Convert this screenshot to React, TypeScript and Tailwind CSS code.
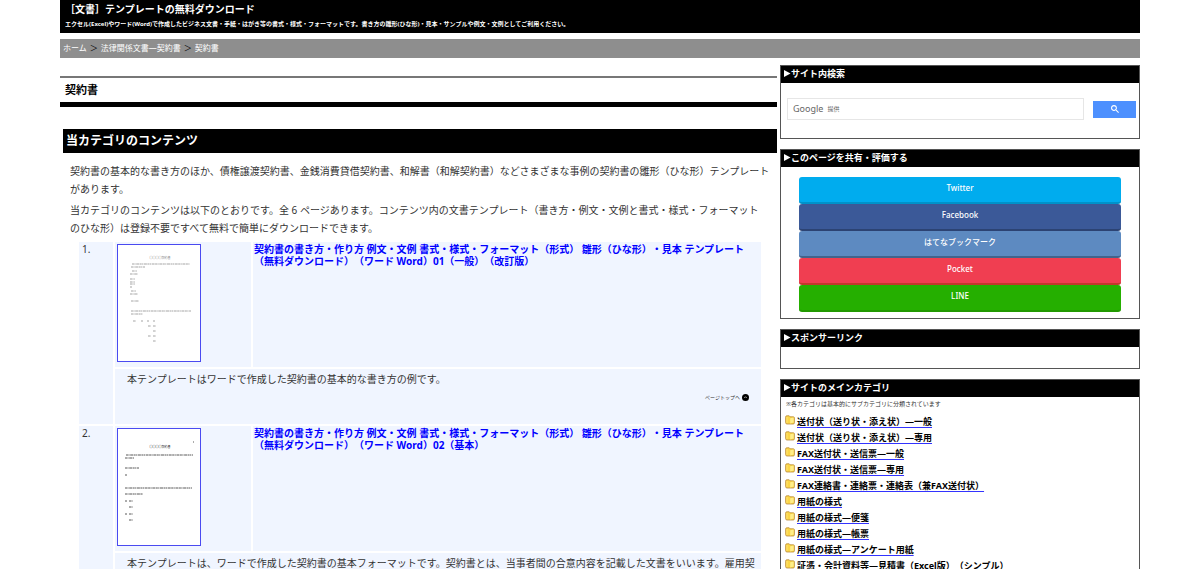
import React from 'react';

type Line = [number, number, number];

interface Template {
  title: string;
  description: string;
  docTitle: string;
  titleY: number;
  ink: string;
  lines: Line[];
}

const templates: Template[] = [
  {
    title:
      '契約書の書き方・作り方 例文・文例 書式・様式・フォーマット（形式） 雛形（ひな形）・見本 テンプレート（無料ダウンロード）（ワード Word）01（一般）（改訂版）',
    description: '本テンプレートはワードで作成した契約書の基本的な書き方の例です。',
    docTitle: '〇〇〇〇契約書',
    titleY: 14,
    ink: '#888',
    lines: [
      [14, 72, 19], [13, 27, 22], [14, 19, 26], [12, 20, 29],
      [12, 17, 34], [12, 17, 37], [12, 17, 39], [12, 14, 42],
      [13, 18, 46], [12, 20, 49], [13, 21, 56],
      [13, 73, 66], [13, 25, 69],
      [15, 18, 76], [23, 25, 76], [29, 31, 76], [35, 37, 76],
      [30, 33, 81], [35, 38, 81], [35, 38, 86], [30, 33, 91], [35, 38, 91], [35, 38, 96],
    ],
  },
  {
    title:
      '契約書の書き方・作り方 例文・文例 書式・様式・フォーマット（形式） 雛形（ひな形）・見本 テンプレート（無料ダウンロード）（ワード Word）02（基本）',
    description:
      '本テンプレートは、ワードで作成した契約書の基本フォーマットです。契約書とは、当事者間の合意内容を記載した文書をいいます。雇用契約書や売買契約書などがあります。',
    docTitle: '〇〇〇〇契約書',
    titleY: 19,
    ink: '#222',
    lines: [
      [75, 76, 13], [8, 75, 26], [7, 16, 29], [7, 21, 39], [7, 9, 46],
      [7, 74, 59], [7, 25, 65],
      [7, 9, 72], [11, 15, 72], [11, 15, 78], [7, 9, 85], [11, 15, 85], [11, 15, 91],
    ],
  },
];

const shares = [
  { name: 'Twitter', color: 'bg-[#00acee] border-[#0092ca]' },
  { name: 'Facebook', color: 'bg-[#3b5998] border-[#2c4373]' },
  { name: 'はてなブックマーク', color: 'bg-[#5d8ac1] border-[#43638b]' },
  { name: 'Pocket', color: 'bg-[#f03e51] border-[#c0392b]' },
  { name: 'LINE', color: 'bg-[#25af00] border-[#219900]' },
];

const categories = [
  '送付状（送り状・添え状）―一般',
  '送付状（送り状・添え状）―専用',
  'FAX送付状・送信票―一般',
  'FAX送付状・送信票―専用',
  'FAX連絡書・連絡票・連絡表（兼FAX送付状）',
  '用紙の様式',
  '用紙の様式―便箋',
  '用紙の様式―帳票',
  '用紙の様式―アンケート用紙',
  '証憑・会計資料等―見積書（Excel版）（シンプル）',
];

function Thumbnail({ item }: { item: Template }) {
  return (
    <svg viewBox="0 0 82 116" className="block h-[118px] w-[84px] border border-[#4a4af0] bg-white">
      <text x="42" y={item.titleY} fontSize="3" textAnchor="middle" fill={item.ink}>
        {item.docTitle}
      </text>
      {item.lines.map(([from, to, y], i) => (
        <path
          key={i}
          d={`M${from} ${y}H${to}`}
          stroke={item.ink}
          strokeWidth="1"
          strokeDasharray="2 0.4 1.2 0.6 3 0.5"
          opacity="0.75"
        />
      ))}
    </svg>
  );
}

function FolderIcon() {
  return (
    <svg viewBox="0 0 10 10" className="mt-px h-[10px] w-[10px] shrink-0">
      <path
        d="M.6 2.2Q.6.8 1.8.8h2.4l.9 1h3.2Q9.4 1.8 9.4 3v4.8Q9.4 9 8.2 9H2Q.6 9 .6 7.6z"
        fill="#fbd545"
        stroke="#b98a3c"
        strokeWidth=".8"
      />
      <path d="M5.2 3.2 8.6 2.4v5.2L5.2 8.4z" fill="#ffee8a" />
      <path d="M2 2v5.8" stroke="#ffe680" strokeWidth=".8" />
    </svg>
  );
}

function Panel({ title, children }: { title: string; children?: React.ReactNode }) {
  return (
    <section className="border border-[#555]">
      <h2 className="flex items-center bg-black pb-[2px] pl-[3px] text-[9px] leading-[15px] font-bold text-white">
        <svg viewBox="0 0 8 8" className="h-[7px] w-[7px] fill-white">
          <path d="M0 0 7.5 4 0 8z" />
        </svg>
        {title}
      </h2>
      {children}
    </section>
  );
}

export default function App() {
  return (
    <div
      lang="ja"
      className="h-screen overflow-hidden bg-white font-['Noto_Sans','Noto_Sans_CJK_JP',sans-serif] text-[10px] text-[#333] [text-spacing-trim:space-all]"
    >
      <div className="mx-auto w-[90%]">
        <header className="h-[33px] bg-black px-[5px] font-bold text-white">
          <h1 className="pt-[1px] text-[10px] leading-[16px]">［文書］テンプレートの無料ダウンロード</h1>
          <p className="text-[6px] leading-[14px]">
            エクセル(Excel)やワード(Word)で作成したビジネス文書・手紙・はがき等の書式・様式・フォーマットです。書き方の雛形(ひな形)・見本・サンプルや例文・文例としてご利用ください。
          </p>
        </header>

        <nav className="mt-[6px] flex gap-[3px] bg-[#8e8e8e] px-[3px] pb-[2px] text-[8px] leading-[17px] text-black">
          <a href="#" className="text-white">ホーム</a>
          <span>＞</span>
          <a href="#" className="text-white">法律関係文書―契約書</a>
          <span>＞</span>
          <a href="#" className="text-white">契約書</a>
        </nav>

        <div className="flex gap-[3px]">
          <main className="flex-1 pt-[18px]">
            <h1 className="border-t-2 border-b-[5px] border-t-[#777] border-b-black pl-[5px] text-[11px] leading-[24px] font-bold text-black">
              契約書
            </h1>
            <h2 className="mt-[22px] ml-[3px] bg-black pb-[1px] pl-[3px] text-[12px] leading-[23px] font-bold text-white">
              当カテゴリのコンテンツ
            </h2>
            <div className="mt-[9px] pl-[10px] leading-[18px]">
              <p>
                契約書の基本的な書き方のほか、債権譲渡契約書、金銭消費貸借契約書、和解書（和解契約書）などさまざまな事例の契約書の雛形（ひな形）テンプレートがあります。
              </p>
              <p className="mt-[3px] pr-[12px]">
                当カテゴリのコンテンツは以下のとおりです。全 6 ページあります。コンテンツ内の文書テンプレート（書き方・例文・文例と書式・様式・フォーマットのひな形）は登録不要ですべて無料で簡単にダウンロードできます。
              </p>
            </div>

            <div className="mt-[3px] pr-[14px] pl-[17px]">
              <table className="w-full table-fixed border-separate border-spacing-[2px]">
                <colgroup>
                  <col className="w-[34px]" />
                  <col className="w-[136px]" />
                  <col />
                </colgroup>
                {templates.map((item, i) => (
                  <tbody key={item.title} className="align-top">
                    <tr>
                      <td rowSpan={2} className="bg-[#f0f5ff] pl-[3px] leading-[14px]">
                        {i + 1}.
                      </td>
                      <td className="h-[125px] bg-[#f0f5ff] p-[2px]">
                        <a href="#" aria-label={item.title}>
                          <Thumbnail item={item} />
                        </a>
                      </td>
                      <td className="bg-[#f0f5ff] p-px leading-[12px]">
                        <a href="#" className="font-bold text-[#0000ff]">{item.title}</a>
                      </td>
                    </tr>
                    <tr>
                      <td colSpan={2} className="h-[55px] bg-[#f0f5ff] pr-[2px] pl-[12px]">
                        <p className="pt-[1px] leading-[18px]">{item.description}</p>
                        <a
                          href="#"
                          className="mr-[10px] flex items-center justify-end gap-[2px] text-[5px] leading-[18px]"
                        >
                          ページトップへ
                          <svg viewBox="0 0 8 8" className="h-[7px] w-[7px]">
                            <circle cx="4" cy="4" r="4" />
                            <path d="m2.5 4.6 1.5-1.5 1.5 1.5" fill="none" stroke="#fff" strokeWidth=".7" />
                          </svg>
                        </a>
                      </td>
                    </tr>
                  </tbody>
                ))}
              </table>
            </div>
          </main>

          <aside className="flex w-1/3 flex-col gap-[10px] pt-[7px]">
            <Panel title="サイト内検索">
              <form className="flex items-center gap-[9px] pt-[15px] pr-[3px] pb-[18px] pl-[6px]">
                <div className="flex h-[22px] flex-1 items-center border border-[#e6e6e6] pl-[5px]">
                  <label htmlFor="q" className="flex items-center gap-[4px] text-[#666]">
                    <span className="text-[9px]">Google</span>
                    <span className="text-[6px]">提供</span>
                  </label>
                  <input id="q" type="text" className="h-full min-w-0 flex-1 px-1 outline-none" />
                </div>
                <button
                  type="button"
                  aria-label="検索"
                  className="flex h-[17px] w-[43px] items-center justify-center bg-[#4d90fe]"
                >
                  <svg viewBox="0 0 13 13" className="h-[8px] w-[8px] fill-white">
                    <path d="m4.8495 7.8226c.82666 0 1.5262-.29146 2.0985-.87438.57232-.58292.86378-1.2877.87438-2.1144.010599-.82666-.28086-1.5262-.87438-2.0985-.59352-.57232-1.293-.86378-2.0985-.87438-.8055-.010599-1.5103.28086-2.1144.87438-.60414.59352-.8956 1.293-.87438 2.0985.021197.8055.31266 1.5103.87438 2.1144.56172.60414 1.2665.8956 2.1144.87438zm4.4695.2115 3.681 3.6819-1.259 1.284-3.6817-3.7 .0019784-.69479-.090043-.098846c-.87973.76087-1.92 1.1413-3.1207 1.1413-1.3553 0-2.5025-.46363-3.4417-1.3909s-1.4088-2.0686-1.4088-3.4239c0-1.3553.4696-2.4966 1.4088-3.4239.9392-.92727 2.0864-1.3969 3.4417-1.4088 1.3553-.011889 2.4906.45771 3.406 1.4088.9154.95107 1.379 2.0924 1.3909 3.4239 0 1.2126-.38043 2.2588-1.1413 3.1385l.098834.090049z" />
                  </svg>
                </button>
              </form>
            </Panel>

            <Panel title="このページを共有・評価する">
              <div className="flex flex-col px-[18px] pt-[10px] pb-[6px]">
                {shares.map((share) => (
                  <button
                    key={share.name}
                    type="button"
                    className={`h-[27px] rounded-[3px] border-b-2 pb-[3px] text-[8px] font-medium text-white ${share.color}`}
                  >
                    {share.name}
                  </button>
                ))}
              </div>
            </Panel>

            <Panel title="スポンサーリンク">
              <div className="h-[21px]" />
            </Panel>

            <Panel title="サイトのメインカテゴリ">
              <p className="pl-[5px] text-[6px] leading-[14px]">※各カテゴリは基本的にサブカテゴリに分類されています</p>
              <ul className="mt-[3px] pl-[4px] text-[9px] leading-[16px] font-bold">
                {categories.map((name) => (
                  <li key={name} className="flex items-start gap-[2px]">
                    <FolderIcon />
                    <a href="#" className="text-black underline decoration-[#3333ff] underline-offset-2">
                      {name}
                    </a>
                  </li>
                ))}
              </ul>
            </Panel>
          </aside>
        </div>
      </div>
    </div>
  );
}
